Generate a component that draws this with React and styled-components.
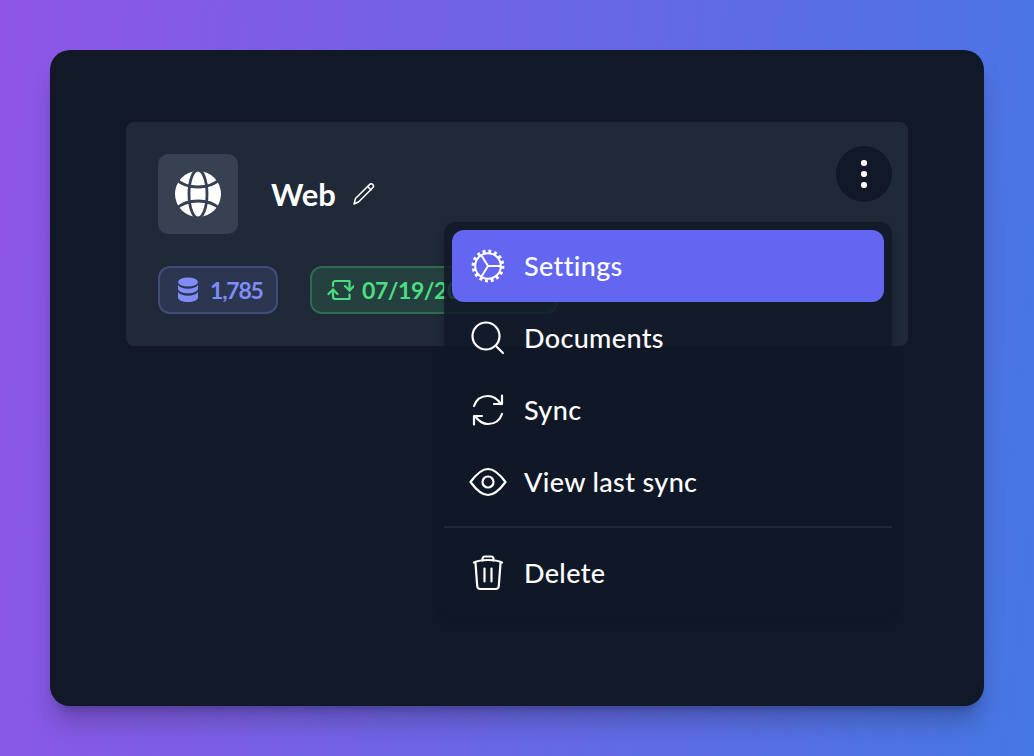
import React from "react";
import styled, { createGlobalStyle } from "styled-components";

const Global = createGlobalStyle`
  html, body { margin: 0; padding: 0; }
  body { font-family: "Lato", "Noto Sans", sans-serif; }
  * { box-sizing: border-box; }
`;
const Page = styled.div`
  width: 1034px; height: 756px; padding: 50px; overflow: hidden;
  background: linear-gradient(97deg, #8f55e6 0%, #4577e3 100%);
`;
const Frame = styled.div`
  width: 934px; height: 656px; padding: 72px 76px;
  background: #111827; border-radius: 20px;
  box-shadow: 0 20px 25px -5px rgba(0,0,0,.22), 0 8px 10px -6px rgba(0,0,0,.22);
`;
const Card = styled.section`
  position: relative; height: 224px; padding: 32px;
  background: #1f2937; border-radius: 8px;
  display: flex; flex-direction: column; gap: 32px;
`;
const Header = styled.div`display: flex; align-items: center; gap: 33px;`;
const IconTile = styled.div`
  width: 80px; height: 80px; border-radius: 10px; background: #374151;
  display: flex; align-items: center; justify-content: center;
`;
const Title = styled.h2`
  margin: 0; display: flex; align-items: center; gap: 16px;
  color: #fff; font-size: 31px; font-weight: 700; line-height: 40px;
`;
const Badges = styled.div`display: flex; gap: 32px;`;
const Badge = styled.div`
  height: 48px; padding: 0 0 0 ${p => p.$pad}px; display: flex; align-items: center; gap: ${p => p.$gap}px;
  width: ${p => p.$w}px; flex: none; white-space: nowrap; overflow: hidden;
  border-radius: 12px; font-size: 23px; font-weight: 700; letter-spacing: ${p => p.$track}px;
  color: ${p => p.$c}; border: 2px solid ${p => p.$c}44; background: ${p => p.$c}22;
  svg { flex: none; }
`;
const Kebab = styled.button`
  position: absolute; top: 24px; right: 16px; width: 56px; height: 56px; padding: 0;
  border: 0; border-radius: 50%; background: #111827;
  display: flex; flex-direction: column; align-items: center; justify-content: center; gap: 5.5px;
`;
const Dot = styled.span`width: 5.5px; height: 5.5px; border-radius: 50%; background: #fff;`;
const Menu = styled.div`
  position: absolute; top: 100px; right: 16px; width: 448px; height: 396px; padding: 8px 0;
  background: rgba(17,24,39,.84); border-radius: 12px;
  box-shadow: 0 4px 12px rgba(0,0,0,.1);
`;
const Item = styled.div`
  height: 72px; margin: 0 8px; padding: 0 16px 0 18px; display: flex; align-items: center; gap: 18px;
  color: #fff; font-size: 27px; font-weight: 500; letter-spacing: 0.35px; border-radius: 12px;
  background: ${p => p.$active ? "#6366f1" : "transparent"};
`;
const Label = styled.span`margin-top: -2px;`;
const Slot = styled.span`width: 36px; height: 36px; flex: none; display: flex;`;
const Divider = styled.hr`margin: 8px 0 9px; border: 0; height: 2px; background: #1f2937;`;

const Line = (p) => (
  <svg width="36" height="36" viewBox="0 0 36 36" fill="none" stroke="#fff" strokeWidth="2.2" strokeLinecap="round" strokeLinejoin="round" {...p} />
);
const Globe = () => (
  <svg width="48" height="48" viewBox="0 0 48 48">
    <circle cx="24" cy="24" r="23" fill="#fff" />
    <g fill="none" stroke="#374151" strokeWidth="2.8">
      <ellipse cx="24" cy="24" rx="9" ry="24" />
      <path d="M2 9c5 5 12 8 22 8s17-3 22-8M2 39c5-5 12-8 22-8s17 3 22 8" />
    </g>
  </svg>
);
const Pencil = () => (
  <svg width="24" height="24" viewBox="0 0 24 24" fill="none" stroke="#fff" strokeWidth="1.5" strokeLinejoin="round">
    <path d="M2 22l1.500-5.500L17.500 2.600c1-1 2.400-1 3.300-.1s.9 2.300-.1 3.300L6.800 19.800z" />
    <path d="M15.600 4.500l3.900 3.900" />
  </svg>
);
const Db = () => (
  <svg width="20" height="26" viewBox="0 0 20 26" fill="#818cf8">
    <ellipse cx="10" cy="5" rx="10" ry="4.500" />
    <path d="M0 8c2 2.700 5.500 3.700 10 3.700S18 10.700 20 8v3.800c0 2.500-4.500 4.500-10 4.500S0 14.300 0 11.800z" />
    <path d="M0 15c2 2.700 5.500 3.700 10 3.700S18 17.700 20 15v5.500c0 2.500-4.500 4.500-10 4.500S0 23 0 20.500z" />
  </svg>
);
const Repeat = () => (
  <svg width="27" height="22" viewBox="0 0 27 22" fill="none" stroke="#4ade80" strokeWidth="2.2" strokeLinecap="round" strokeLinejoin="round">
    <path d="M6 7V4.500A2.500 2.500 0 0 1 8.500 2H22.500v9.500" />
    <path d="M6 10.500V17.500A2.500 2.500 0 0 0 8.500 20H22.500V15.500" />
    <path d="M1.500 15L6 10.500 10.500 15" />
    <path d="M18 7L22.500 11.500 27 7" />
  </svg>
);
const Gear = () => (
  <Line strokeWidth="2">
    <circle cx="18" cy="18" r="12.800" />
    <circle cx="18" cy="18" r="14.800" strokeWidth="3.200" strokeDasharray="2.900 2.910" strokeLinecap="butt" />
    <path d="M18 18L30 18M18 18L11.500 7.500M18 18L11.500 28.500" />
  </Line>
);
const Search = () => (
  <Line><circle cx="16" cy="16" r="13.500" /><path d="M26 26l7 7" /></Line>
);
const Sync = () => (
  <Line>
    <path d="M4 14C6 8 11 4 18 4c5.500 0 9.500 3 13 8" />
    <path d="M32 3.500V12H24" />
    <path d="M32 22c-2 6-7 10-14 10-5.500 0-9.500-3-13-8" />
    <path d="M4 32.500V24H12" />
  </Line>
);
const Eye = () => (
  <Line style={{ overflow: "visible" }}>
    <path d="M0.500 18C6 10.500 11.500 5 18 5s12 5.500 17.500 13C30 25.500 24.500 31 18 31S6 25.500 0.500 18z" />
    <circle cx="18" cy="18" r="5.500" />
  </Line>
);
const Trash = () => (
  <Line>
    <path d="M4 7.500c3-1.500 9-2.500 14-2.500s11 1 14 2.500" />
    <path d="M12.500 5.500V4c0-1.500 1-2.500 2.500-2.500h6c1.500 0 2.500 1 2.500 2.500v1.500" />
    <path d="M5.500 8l1.700 23c.1 2 1.300 3 3.300 3h15c2 0 3.200-1 3.300-3l1.700-23" />
    <path d="M14.500 13.500v13M21.500 13.500v13" />
  </Line>
);

export default function App() {
  return (
    <Page>
      <Global />
      <Frame>
        <Card>
          <Header>
            <IconTile><Globe /></IconTile>
            <Title>Web <Pencil /></Title>
          </Header>
          <Badges>
            <Badge $c="#818cf8" $w={120} $pad={18} $gap={12} $track={-1.2}><Db /> 1,785</Badge>
            <Badge $c="#4ade80" $w={248} $pad={15} $gap={8} $track={-0.45}><Repeat /> 07/19/2024 10:24</Badge>
          </Badges>
          <Kebab aria-label="More"><Dot /><Dot /><Dot /></Kebab>
          <Menu>
            <Item $active><Slot><Gear /></Slot><Label>Settings</Label></Item>
            <Item><Slot><Search /></Slot><Label>Documents</Label></Item>
            <Item><Slot><Sync /></Slot><Label>Sync</Label></Item>
            <Item><Slot><Eye /></Slot><Label>View last sync</Label></Item>
            <Divider />
            <Item><Slot><Trash /></Slot><Label>Delete</Label></Item>
          </Menu>
        </Card>
      </Frame>
    </Page>
  );
}
